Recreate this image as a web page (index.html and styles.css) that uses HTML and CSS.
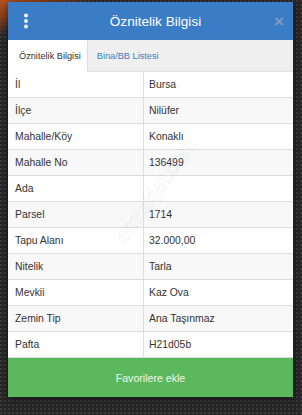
FILE: index.html
```html
<!DOCTYPE html>
<html>
<head>
	<meta charset="UTF-8">
	<title>Öznitelik Bilgisi</title>
	<link rel="stylesheet" href="styles.css">
</head>
<body>
	<div class="modal">
		<div class="modal-header">
			<button class="menu-btn" title="Menü">
				<svg viewBox="0 0 6 16" width="6" height="16">
					<circle cx="3" cy="2.5" r="1.9" fill="currentColor"/>
					<circle cx="3" cy="8" r="1.9" fill="currentColor"/>
					<circle cx="3" cy="13.5" r="1.9" fill="currentColor"/>
				</svg>
			</button>
			<div class="modal-title">Öznitelik Bilgisi</div>
			<button class="close-btn" title="Kapat">&times;</button>
		</div>

		<div class="tabs">
			<div class="tab active">Öznitelik Bilgisi</div>
			<div class="tab">Bina/BB Listesi</div>
		</div>

		<div class="table-wrap">
			<table class="attr-table">
				<tr><td>İl</td><td>Bursa</td></tr>
				<tr><td>İlçe</td><td>Nilüfer</td></tr>
				<tr><td>Mahalle/Köy</td><td>Konaklı</td></tr>
				<tr><td>Mahalle No</td><td>136499</td></tr>
				<tr><td>Ada</td><td></td></tr>
				<tr><td>Parsel</td><td>1714</td></tr>
				<tr><td>Tapu Alanı</td><td>32.000,00</td></tr>
				<tr><td>Nitelik</td><td>Tarla</td></tr>
				<tr><td>Mevkii</td><td>Kaz Ova</td></tr>
				<tr><td>Zemin Tip</td><td>Ana Taşınmaz</td></tr>
				<tr><td>Pafta</td><td>H21d05b</td></tr>
			</table>
			<!-- watermark over the table -->
			<div class="watermark">emlakjet.com</div>
		</div>

		<button class="fav-btn">Favorilere ekle</button>
	</div>
</body>
</html>
```

FILE: styles.css
```css
html, body {
	height: 100%;
}

body {
	margin: 0;
	padding: 2px 9px 0 8px;
	box-sizing: border-box;
	font-family: 'Liberation Sans', Arial, sans-serif;
	background:
		linear-gradient(160deg, #b8531c 0, #8a3f18 16px, transparent 34px) no-repeat,
		radial-gradient(circle at 1px 1px, #3a3a3a 1px, transparent 1.5px) 0 0 / 4px 4px,
		#262626;
}

.modal {
	width: 285px;
	background: #fff;
	display: flex;
	flex-direction: column;
	box-shadow: 0 2px 8px rgba(0,0,0,0.5);
}

.modal-header {
	height: 38px;
	background: #3b7cc6;
	display: flex;
	align-items: center;
	padding: 0 3px 0 15px;
}

.menu-btn {
	background: none;
	border: none;
	color: #fff;
	padding: 0;
	width: 10px;
	cursor: pointer;
}

svg {
	display: block;
}

.modal-title {
	flex-grow: 1;
	text-align: center;
	color: #fff;
	font-size: 13.6px;
	padding-left: 10px;
}

.close-btn {
	background: none;
	border: none;
	padding: 0;
	width: 22px;
	color: #7d9cc2;
	font-size: 17px;
	font-weight: bold;
	line-height: 1;
	cursor: pointer;
}

.tabs {
	display: flex;
	height: 32px;
	background: #efefef;
	border-bottom: 1px solid #e2e2e2;
	box-sizing: border-box;
}

.tab {
	padding: 0 9px 0 9px;
	display: flex;
	align-items: center;
	font-size: 9.2px;
	color: #3d7fc0;
	cursor: pointer;
}

.tab.active {
	background: #fff;
	color: #333;
	padding: 0 6px 0 11px;
	border-right: 1px solid #ddd;
	margin-bottom: -1px;
}

.table-wrap {
	position: relative;
	overflow: hidden;
}

.attr-table {
	width: 100%;
	border-collapse: collapse;
	font-size: 10.4px;
	color: #333;
}

.attr-table td {
	height: 25px;
	padding: 0 0 0 7px;
	border-bottom: 1px solid #dcdcdc;
	vertical-align: middle;
}

.attr-table td:first-child {
	width: 128px;
	border-right: 1px solid #dcdcdc;
}

.attr-table td:last-child {
	padding-left: 5px;
}

.attr-table tr:nth-child(even) td {
	background: #f8f8f8;
}

.watermark {
	position: absolute;
	left: 86px;
	top: 106px;
	font-size: 21px;
	color: transparent;
	-webkit-text-stroke: 0.6px rgba(0,0,0,0.09);
	transform: rotate(-54deg);
	pointer-events: none;
	white-space: nowrap;
}

.fav-btn {
	height: 39px;
	border: none;
	background: #5cb85c;
	color: #eef8ee;
	font-family: inherit;
	font-size: 10.6px;
	cursor: pointer;
}
```
